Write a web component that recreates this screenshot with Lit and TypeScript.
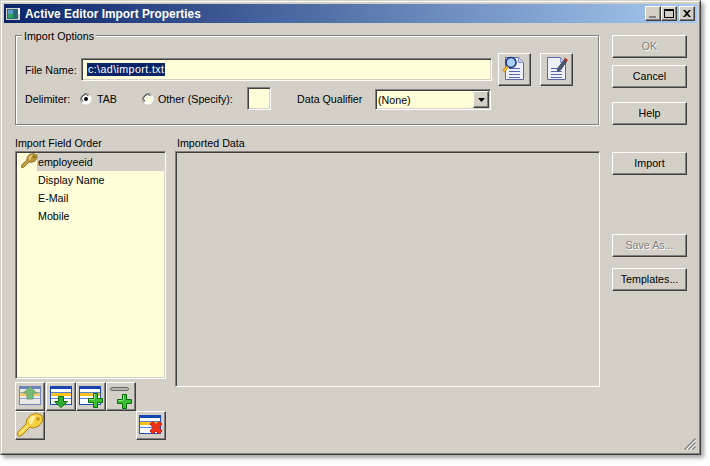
import { LitElement, html, css, svg } from "lit";
import { customElement } from "lit/decorators.js";

const page = svg`<path d="M3.500 1.500h13l5 5v17h-18z" fill="#eef1fb" stroke="#5a68a8"/><path d="M16.500 1.500v5h5z" fill="#c4d0ee" stroke="#8a96c8"/><path d="M7 12.500h11M7 15.500h11M7 18.500h11M7 21.500h11" stroke="#5a68a8"/>`;

const table = svg`<rect x="0.500" y="2.500" width="21" height="18" fill="#fff" stroke="#1f4fb4"/><rect x="0" y="2" width="22" height="3" fill="#1746b0"/><path d="M1 8.500h20M1 14.500h20" stroke="#5a80d0"/><rect x="1" y="9" width="20" height="3" fill="#ffc41c"/>`;

const greenPlus = (x: number, y: number) => svg`<g transform="translate(${x} ${y})"><path d="M5.500.500h4v5h5v4h-5v5h-4v-5h-5v-4h5z" fill="#38c030" stroke="#0a6a0a"/><path d="M6 6V1h1v5zM1 6h5v1H1z" fill="#8ce878"/></g>`;

const keyShape = (fill: string, hi: string, line: string) => svg`
  <path d="M10 6L14 1.500 20 .5l5 2 .5 5.500-3.500 5-6 2-3-1-8 8-3 1.500-1.500-1.500.5-3 8-8z" fill="${fill}" stroke="${line}"/>
  <path d="M11.500 7l3.500-4 4-.5-1.500 3L15 11l-2 .500z" fill="${hi}"/>
  <path d="M19 5l3-1 1 3-3 1z" fill="${line}" opacity=".75"/>
  <path d="M3 20.500l8-8" stroke="${hi}" stroke-width="1.200"/>`;

const icons: Record<string, unknown> = {
  up: svg`<g transform="translate(1 0)"><g opacity=".55">${table}</g><path d="M11 2.500l6.500 6.500H14v6H8V9H4.500z" fill="#74bc74" stroke="#6a9a78"/></g>`,
  down: svg`<g transform="translate(1 0)">${table}<path d="M8.500 12.500h5v5h4L11 23.500l-6.500-6h4z" fill="#30b030" stroke="#0a6a0a"/></g>`,
  ins: svg`${table}${greenPlus(9, 9)}`,
  add: svg`<rect x="1.500" y="3.500" width="18" height="3" rx="1.500" fill="#b8b4ac" stroke="#6a6a6a"/>${greenPlus(8, 10)}`,
  del: svg`${table}<path d="M14 8.500l3 3 3-3 3 2.500-3 3.500 3 3.500-3 3-3-3-3 3-3-3 3-3.500-3-3.500z" fill="#f03018" stroke="#c02010"/>`,
};

@customElement("app-root")
export class AppRoot extends LitElement {
  static styles = css`
    :host { display: block; width: 710px; height: 466px; background: #fff; overflow: hidden; font: 10.700px "Liberation Sans", Arial, sans-serif; color: #000; }
    .win { position: relative; box-sizing: border-box; width: 701px; height: 455px; background: #d4d0c8; border: 1px solid; border-color: #d4d0c8 #404040 #404040 #d4d0c8; box-shadow: 3px 3px 4px rgba(0,0,0,.35); display: flex; flex-direction: column; }
    .inner { flex: 1; border: 1px solid; border-color: #fff #808080 #808080 #fff; padding: 2px 2px 0; display: flex; flex-direction: column; min-height: 0; }
    .title { height: 19px; background: linear-gradient(90deg, #0a246a, #a6caf0); display: flex; align-items: center; color: #fff; font: bold 11.900px "Liberation Sans", sans-serif; }
    .appicon { width: 16px; height: 16px; margin: 0 3px 0 2px; flex: none; }
    .title span { flex: 1; white-space: nowrap; }
    .cap { box-sizing: border-box; width: 16px; height: 15px; background: #d4d0c8; border: 1px solid; border-color: #fff #404040 #404040 #fff; box-shadow: inset -1px -1px 0 #808080; display: flex; align-items: center; justify-content: center; flex: none; }
    .cap svg { display: block; }
    .caps { display: flex; margin-right: 2px; }
    .caps .x { margin-left: 2px; }
    .body { flex: 1; display: flex; padding: 12px 0 0 11px; min-height: 0; }
    .main { width: 585px; flex: none; }
    .group { box-sizing: border-box; position: relative; width: 584px; height: 90px; border: 1px solid #808080; box-shadow: 1px 1px 0 #fff, inset 1px 1px 0 #fff; }
    .legend { position: absolute; left: 6px; top: -6px; background: #d4d0c8; padding: 0 2px; line-height: 13px; }
    .row1 { display: flex; align-items: center; height: 33px; margin: 17px 0 0 9px; }
    .row2 { display: flex; align-items: center; height: 23px; margin: 1px 0 0 9px; }
    .lbl1 { width: 56px; flex: none; }
    .row2 .lbl1 { width: 55px; }
    .sunk { box-sizing: border-box; background: #ffffd9; border: 1px solid; border-color: #808080 #fff #fff #808080; box-shadow: inset 1px 1px 0 #404040, inset -1px -1px 0 #d4d0c8; }
    .file { width: 411px; height: 23px; display: flex; align-items: center; padding-left: 5px; }
    .sel { background: #0a246a; color: #fff; line-height: 13px; padding: 0 0 0 1px; letter-spacing: .4px; }
    .tool { box-sizing: border-box; background: #d4d0c8; border: 1px solid; border-color: #fff #404040 #404040 #fff; box-shadow: inset -1px -1px 0 #808080; display: flex; align-items: center; justify-content: center; flex: none; padding: 0; }
    .tool svg { overflow: visible; }
    .big { width: 33px; height: 33px; margin-left: 6px; }
    .big + .big { margin-left: 9px; }
    .radio { width: 12px; height: 12px; flex: none; display: block; }
    .tab { margin: 0 0 0 5px; width: 45px; }
    .other { margin-left: 4px; width: 89px; }
    .small { width: 24px; height: 23px; }
    .dq { margin-left: 26px; width: 78px; }
    .combo { width: 116px; height: 21px; margin-top: 2px; display: flex; align-items: center; padding-left: 2px; }
    .combo span { flex: 1; }
    .arrow { width: 16px; height: 17px; margin-right: 1px; box-sizing: border-box; }
    .panels { display: flex; margin-top: 11px; }
    .left { width: 151px; flex: none; }
    .right { margin-left: 9px; }
    .plabel { height: 15px; line-height: 15px; margin-left: 0; white-space: nowrap; }
    .right .plabel { margin-left: 2px; }
    .list { width: 151px; height: 228px; padding: 1px 0 1px 2px; }
    .item { height: 18px; line-height: 18px; padding-left: 20px; white-space: nowrap; display: flex; }
    .item.on { position: relative; padding-left: 19px; }
    .item.on b { font-weight: normal; flex: 1; background: #d4d0c8; padding-left: 1px; }
    .k { position: absolute; left: 3px; top: 0; width: 17px; height: 16px; }
    .data { width: 425px; height: 236px; background: #d4d0c8; }
    .tb { display: grid; grid-template-columns: 31px 30px 30px 30px 30px; grid-template-rows: 29px 29px; margin-top: 3px; }
    .tb .tool { width: 30px; height: 29px; }
    .col5 { grid-column: 5; grid-row: 2; }
    .r2 { grid-row: 2; grid-column: 1; }
    .side { margin-left: 12px; width: 75px; display: flex; flex-direction: column; flex: none; }
    .btn { box-sizing: border-box; width: 75px; height: 23px; background: #d4d0c8; border: 1px solid; border-color: #fff #404040 #404040 #fff; box-shadow: inset -1px -1px 0 #808080; display: flex; align-items: center; justify-content: center; font: inherit; color: #000; flex: none; padding: 0 0 1px; }
    .btn.off { color: #808080; text-shadow: 1px 1px 0 #fff; }
    .m1 { margin-top: 7px; } .m2 { margin-top: 14px; } .m3 { margin-top: 27px; } .m4 { margin-top: 59px; } .m5 { margin-top: 11px; }
    .grip { position: absolute; right: 4px; bottom: 4px; width: 12px; height: 12px; }
  `;

  private radio(on: boolean) {
    return html`<svg class="radio" viewBox="0 0 12 12"><circle cx="6" cy="6" r="5.500" fill="#fff"/><path d="M1.800 9.500A5.500 5.500 0 0 1 9.500 1.800" fill="none" stroke="#808080"/><path d="M2.800 8.500A4 4 0 0 1 8.500 2.800" fill="none" stroke="#404040"/>${on ? svg`<circle cx="6" cy="6" r="2" fill="#000"/>` : svg`<circle cx="6.500" cy="6.500" r="3" fill="#ffffd9"/>`}</svg>`;
  }

  private tool(name: string, cls = "") {
    return html`<button class="tool ${cls}"><svg width="24" height="26" viewBox="0 0 24 26">${icons[name]}</svg></button>`;
  }

  render() {
    return html`
      <div class="win"><div class="inner">
        <div class="title">
          <svg class="appicon" viewBox="0 0 16 16" shape-rendering="crispEdges"><rect y="2" width="14" height="12" fill="#d4d0c8"/><rect x="1" y="3" width="11" height="10" fill="#2a6a78"/><rect x="2" y="4" width="5" height="4" fill="#5a9ac8"/><rect x="2" y="8" width="5" height="4" fill="#2ea060"/><rect x="12" y="2" width="2" height="6" fill="#fff"/></svg>
          <span>Active Editor Import Properties</span>
          <div class="caps">
            <div class="cap"><svg width="8" height="9" viewBox="0 0 8 9"><rect x="0" y="7" width="7" height="2" fill="#808080"/></svg></div>
            <div class="cap"><svg width="10" height="9" viewBox="0 0 10 9"><path d="M0 0h10v9H0z M1 2v6h8V2z" fill="#000" fill-rule="evenodd"/></svg></div>
            <div class="cap x"><svg width="8" height="7" viewBox="0 0 8 7"><path d="M0 0h2l2 2 2-2h2L5 3.500 8 7H6L4 5 2 7H0l3-3.500z" fill="#000"/></svg></div>
          </div>
        </div>
        <div class="body">
          <div class="main">
            <div class="group">
              <div class="legend">Import Options</div>
              <div class="row1">
                <div class="lbl1">File Name:</div>
                <div class="sunk file"><span class="sel">c:\\ad\\import.txt</span></div>
                <button class="tool big"><svg width="25" height="27" viewBox="0 0 25 27">${page}<circle cx="9" cy="6.500" r="5" fill="#a8d0f8" stroke="#1e2e88" stroke-width="1.500"/><path d="M5.500 10.500L1.500 15.500" stroke="#c88a10" stroke-width="3"/><path d="M5.500 10.500L1.500 15.500" stroke="#fcd850" stroke-width="1.200"/></svg></button>
                <button class="tool big"><svg width="25" height="27" viewBox="0 0 25 27">${page}<path d="M14 12l6.500-8.500 2 2L16.500 14l-3 1z" fill="#485a70" stroke="#384860"/><path d="M21 1.500l3 2.500-1.500 2-2.500-2.500z" fill="#c03020"/></svg></button>
              </div>
              <div class="row2">
                <div class="lbl1">Delimiter:</div>
                ${this.radio(true)}<span class="tab">TAB</span>
                ${this.radio(false)}<span class="other">Other (Specify):</span>
                <div class="sunk small"></div>
                <span class="dq">Data Qualifier</span>
                <div class="sunk combo"><span>(None)</span>
                  <button class="tool arrow"><svg width="7" height="4" viewBox="0 0 7 4"><path d="M0 0h7L3.500 4z" fill="#000"/></svg></button>
                </div>
              </div>
            </div>
            <div class="panels">
              <div class="left">
                <div class="plabel">Import Field Order</div>
                <div class="sunk list">
                  <div class="item on">
                    <svg class="k" viewBox="0 0 27 25">${keyShape("#b89636", "#e0c468", "#6e5414")}</svg>
                    <b>employeeid</b>
                  </div>
                  <div class="item">Display Name</div>
                  <div class="item">E-Mail</div>
                  <div class="item">Mobile</div>
                </div>
                <div class="tb">
                  ${this.tool("up")}${this.tool("down")}${this.tool("ins")}${this.tool("add")}
                  <button class="tool r2"><svg width="27" height="25" viewBox="0 0 27 25">${keyShape("#f8d040", "#fff0a0", "#b08410")}</svg></button>
                  ${this.tool("del", "col5")}
                </div>
              </div>
              <div class="right">
                <div class="plabel">Imported Data</div>
                <div class="sunk data"></div>
              </div>
            </div>
          </div>
          <div class="side">
            <button class="btn off">OK</button>
            <button class="btn m1">Cancel</button>
            <button class="btn m2">Help</button>
            <button class="btn m3">Import</button>
            <button class="btn off m4">Save As...</button>
            <button class="btn m5">Templates...</button>
          </div>
        </div>
      </div>
      <svg class="grip" viewBox="0 0 12 12"><path d="M11.500 .5L.5 11.500M11.500 4.500L4.500 11.500M11.500 8.500L8.500 11.500" stroke="#808080" stroke-width="1.200"/><path d="M11.500 2.500L2.500 11.500M11.500 6.500L6.500 11.500" stroke="#fff"/></svg>
      </div>`;
  }
}
